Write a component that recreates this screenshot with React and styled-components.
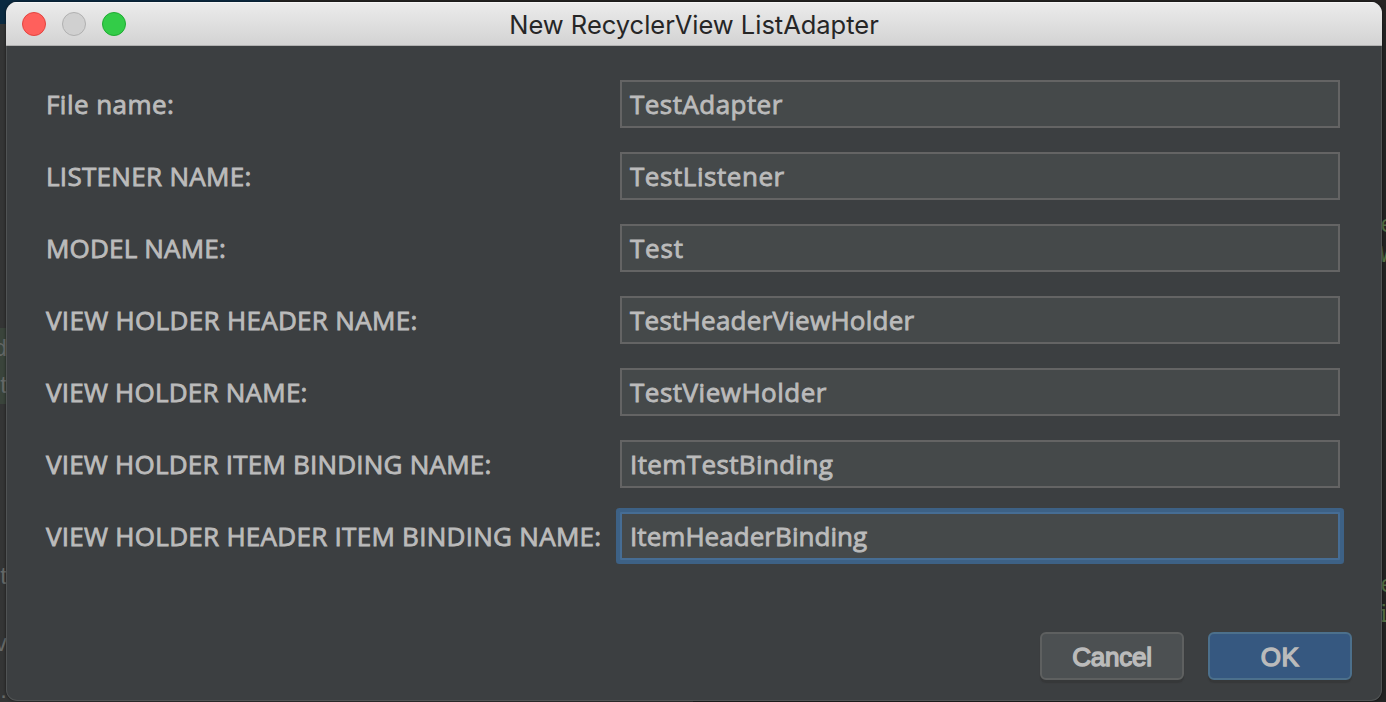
import React from "react";
import styled, { createGlobalStyle, css } from "styled-components";

const GlobalStyle = createGlobalStyle`
  * { box-sizing: border-box; }
  html, body { margin: 0; height: 100%; overflow: hidden; background: #242424; }
`;

const Desktop = styled.div`
  position: relative;
  height: 702px;
  padding: 2px 4px 1px 6px;
  overflow: hidden;
  background: linear-gradient(90deg, #343535 0 50%, #232323 50%);
`;

/* Editor window that shows around the edges of the dialog */
const EditorTabs = styled.div`
  position: absolute;
  inset: 0 0 auto 0;
  height: 24px;
  background: linear-gradient(90deg, #0b2a41 0 270px, #262423 270px);
`;

const EditorHighlight = styled.div`
  position: absolute;
  left: 0;
  top: 328px;
  width: 8px;
  height: 76px;
  background: #3a443b;
`;

const CodeFragment = styled.span`
  position: absolute;
  top: ${(p) => p.$top}px;
  ${(p) =>
    p.$side === "left"
      ? css`
          right: 1379px;
          font: 24px/28px "Liberation Sans", sans-serif;
          color: #666967;
        `
      : css`
          left: ${p.$left || 1380}px;
          font: 24px/28px "Liberation Mono", monospace;
          color: #557349;
        `}
`;

const Window = styled.section`
  position: relative;
  display: flex;
  flex-direction: column;
  height: 699px;
  border-radius: 11px;
  overflow: hidden;
  background: #3c3f41;
  box-shadow: 0 0 3px rgba(0, 0, 0, 0.6);
`;

const TitleBar = styled.header`
  display: grid;
  grid-template-columns: 1fr auto 1fr;
  align-items: center;
  height: 44px;
  padding: 0 16px;
  background: linear-gradient(#ececec, #d3d3d3);
  border-bottom: 1px solid #b1b1b1;
  box-shadow: inset 0 1px #f6f6f6;
`;

const TrafficLights = styled.div`
  display: flex;
  gap: 16px;
`;

const Light = styled.span`
  width: 24px;
  height: 24px;
  border-radius: 50%;
  background: ${(p) => p.$fill};
  border: 1px solid ${(p) => p.$ring};
`;

const Title = styled.h1`
  margin: 0;
  padding-top: 3px;
  font: 400 25.5px/40px Inter, sans-serif;
  letter-spacing: -0.02px;
  color: #262626;
`;

const Body = styled.form`
  flex: 1;
  margin: 0;
  padding: 34px 29px 20px 39px;
  border: solid #505354;
  border-width: 0 1px 1px;
  border-radius: 0 0 11px 11px;
`;

const Fields = styled.div`
  display: flex;
  flex-direction: column;
  gap: 24px;
`;

const Row = styled.div`
  display: grid;
  grid-template-columns: 574px 720px;
  height: 48px;
`;

const formText = css`
  font: 400 26px/48px "Open Sans", sans-serif;
  letter-spacing: ${(p) => p.$tracking}px;
  color: #bbbbbb;
  -webkit-text-stroke: 0.85px #bbbbbb;
  white-space: nowrap;
`;

const Label = styled.label`
  ${formText}
`;

const Field = styled.div`
  ${formText}
  line-height: 44px;
  padding-left: 8px;
  background: #45494a;
  border: 2px solid #646464;
  ${(p) =>
    p.$focused &&
    css`
      border-color: #466d94;
      border-radius: 1px;
      box-shadow: 0 0 0 4px #3d6185;
    `}
`;

const Actions = styled.footer`
  display: flex;
  justify-content: flex-end;
  gap: 24px;
  margin-top: 72px;
`;

const Button = styled.button`
  width: 144px;
  height: 48px;
  padding: 2px 0 0;
  border: 2px solid ${(p) => (p.$primary ? "#4c708c" : "#5e6060")};
  border-radius: 6px;
  background: ${(p) => (p.$primary ? "#365880" : "#4c5052")};
  box-shadow: 0 3px 1px #363839;
  font: 400 26px/42px "Liberation Sans", Arial, sans-serif;
  letter-spacing: ${(p) => (p.$primary ? 0.4 : -0.2)}px;
  color: #bbbbbb;
  -webkit-text-stroke: 1.4px #bbbbbb;
`;

const rows = [
  { label: "File name:", value: "TestAdapter", labelTracking: 0.45, tracking: 0.45 },
  { label: "LISTENER NAME:", value: "TestListener", labelTracking: 0.3, tracking: 0.55 },
  { label: "MODEL NAME:", value: "Test", labelTracking: 0.18, tracking: 0.8 },
  { label: "VIEW HOLDER HEADER NAME:", value: "TestHeaderViewHolder", labelTracking: 0.32, tracking: 0.26 },
  { label: "VIEW HOLDER NAME:", value: "TestViewHolder", labelTracking: 0.23, tracking: 0.5 },
  { label: "VIEW HOLDER ITEM BINDING NAME:", value: "ItemTestBinding", labelTracking: 0.22, tracking: 0.38 },
  { label: "VIEW HOLDER HEADER ITEM BINDING NAME:", value: "ItemHeaderBinding", labelTracking: 0.28, tracking: 0.05, focused: true },
];

export default function App() {
  return (
    <>
      <GlobalStyle />
      <Desktop>
        <EditorTabs />
        <EditorHighlight />
        <CodeFragment $side="left" $top={334}>d</CodeFragment>
        <CodeFragment $side="left" $top={371}>t</CodeFragment>
        <CodeFragment $side="left" $top={562}>ot</CodeFragment>
        <CodeFragment $side="left" $top={629}>v</CodeFragment>
        <CodeFragment $side="left" $top={676}>e.</CodeFragment>
        <CodeFragment $side="right" $top={212}>e</CodeFragment>
        <CodeFragment $side="right" $top={242}>W</CodeFragment>
        <CodeFragment $side="right" $top={572}>e</CodeFragment>
        <CodeFragment $side="right" $top={602} $left={1376}>i</CodeFragment>
        <Window>
          <TitleBar>
            <TrafficLights>
              <Light $fill="#ff605c" $ring="#e2443f" />
              <Light $fill="#d0d0d0" $ring="#b0b0b0" />
              <Light $fill="#33cc48" $ring="#1fab32" />
            </TrafficLights>
            <Title>New RecyclerView ListAdapter</Title>
          </TitleBar>
          <Body>
            <Fields>
              {rows.map((row) => (
                <Row key={row.label}>
                  <Label $tracking={row.labelTracking}>{row.label}</Label>
                  <Field $tracking={row.tracking} $focused={row.focused}>{row.value}</Field>
                </Row>
              ))}
            </Fields>
            <Actions>
              <Button type="button">Cancel</Button>
              <Button type="button" $primary>OK</Button>
            </Actions>
          </Body>
        </Window>
      </Desktop>
    </>
  );
}
